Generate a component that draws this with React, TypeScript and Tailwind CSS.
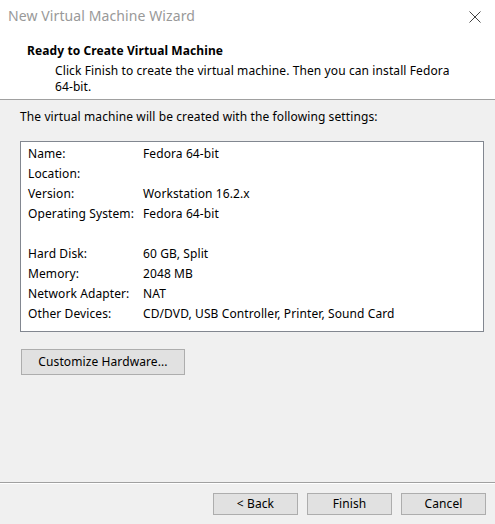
const rows: [string, string][] = [
  ["Name:", "Fedora 64-bit"],
  ["Location:", ""],
  ["Version:", "Workstation 16.2.x"],
  ["Operating System:", "Fedora 64-bit"],
  ["", ""],
  ["Hard Disk:", "60 GB, Split"],
  ["Memory:", "2048 MB"],
  ["Network Adapter:", "NAT"],
  ["Other Devices:", "CD/DVD, USB Controller, Printer, Sound Card"],
];

function WinButton({ label, className }: { label: string; className: string }) {
  return (
    <button
      className={`flex items-center justify-center border border-[#adadad] bg-[#e1e1e1] text-[12px] tracking-[0.1px] text-black ${className}`}
    >
      {label}
    </button>
  );
}

export default function App() {
  return (
    <div className="flex h-[524px] w-[495px] flex-col overflow-hidden bg-[#f0f0f0] font-['Noto_Sans',sans-serif] text-[12px] leading-[16px] tracking-[0.1px] text-black">
      {/* header */}
      <div className="h-[100px] border-b border-[#a0a0a0] bg-white">
        <div className="flex items-center justify-between pt-[8px] pl-[8px] pr-[14px]">
          <span className="text-[14px] leading-[16px] text-[#999999]">New Virtual Machine Wizard</span>
          <svg width="12" height="12" viewBox="0 0 12 12" className="mt-[2px]">
            <path d="M0.5 0.5 L11.5 11.5 M11.5 0.5 L0.5 11.5" stroke="#444" strokeWidth="1" fill="none" />
          </svg>
        </div>
        <div className="mt-[19px] pl-[27px] font-bold">Ready to Create Virtual Machine</div>
        <div className="mt-[4px] pl-[55px] pr-[30px]">
          Click Finish to create the virtual machine. Then you can install Fedora{" "}
          <span className="whitespace-nowrap">64-bit.</span>
        </div>
      </div>

      {/* body */}
      <div className="flex-1 pl-[20px] pr-[11px] pt-[9px]">
        <div>The virtual machine will be created with the following settings:</div>
        <div className="mt-[16px] border border-[#828790] bg-white pt-[2px] pb-[7px] pl-[7px]">
          {rows.map(([k, v], i) => (
            <div key={i} className="flex h-[20px] items-center">
              <span className="w-[115px] shrink-0">{k}</span>
              <span>{v}</span>
            </div>
          ))}
        </div>
        <WinButton label="Customize Hardware..." className="ml-px mt-[17px] h-[26px] w-[164px]" />
      </div>

      {/* footer */}
      <div className="flex h-[42px] justify-end gap-[9px] border-t border-[#a0a0a0] pr-[9px] pt-[10px] shadow-[inset_0_1px_0_#ffffff]">
        <WinButton label="< Back" className="h-[22px] w-[85px]" />
        <WinButton label="Finish" className="h-[22px] w-[85px]" />
        <WinButton label="Cancel" className="h-[22px] w-[85px]" />
      </div>
    </div>
  );
}
